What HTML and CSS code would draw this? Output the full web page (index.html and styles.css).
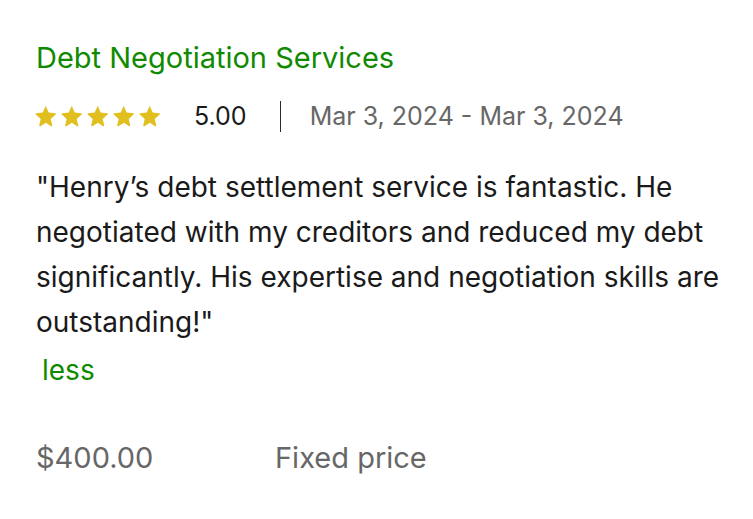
FILE: index.html
```html
<!DOCTYPE html>
<html lang="en">
<head>
<meta charset="utf-8">
<title>Review</title>
<link rel="stylesheet" href="styles.css">
</head>
<body>
<article class="review">
  <h2 class="title">Debt Negotiation Services</h2>
  <div class="meta">
    <div class="stars" aria-label="5 stars">
      <svg class="star" viewBox="0 0 24 24"><path d="M12 2.6l2.7 6 6.5.6c.7.1 1 .9.4 1.4l-4.9 4.3 1.5 6.4c.2.7-.6 1.2-1.2.9L12 18.8l-5.6 3.4c-.6.4-1.4-.2-1.2-.9l1.5-6.4-4.9-4.3c-.5-.5-.2-1.3.4-1.4l6.5-.6 2.7-6c.3-.6 1.3-.6 1.6 0z"/></svg>
      <svg class="star" viewBox="0 0 24 24"><path d="M12 2.6l2.7 6 6.5.6c.7.1 1 .9.4 1.4l-4.9 4.3 1.5 6.4c.2.7-.6 1.2-1.2.9L12 18.8l-5.6 3.4c-.6.4-1.4-.2-1.2-.9l1.5-6.4-4.9-4.3c-.5-.5-.2-1.3.4-1.4l6.5-.6 2.7-6c.3-.6 1.3-.6 1.6 0z"/></svg>
      <svg class="star" viewBox="0 0 24 24"><path d="M12 2.6l2.7 6 6.5.6c.7.1 1 .9.4 1.4l-4.9 4.3 1.5 6.4c.2.7-.6 1.2-1.2.9L12 18.8l-5.6 3.4c-.6.4-1.4-.2-1.2-.9l1.5-6.4-4.9-4.3c-.5-.5-.2-1.3.4-1.4l6.5-.6 2.7-6c.3-.6 1.3-.6 1.6 0z"/></svg>
      <svg class="star" viewBox="0 0 24 24"><path d="M12 2.6l2.7 6 6.5.6c.7.1 1 .9.4 1.4l-4.9 4.3 1.5 6.4c.2.7-.6 1.2-1.2.9L12 18.8l-5.6 3.4c-.6.4-1.4-.2-1.2-.9l1.5-6.4-4.9-4.3c-.5-.5-.2-1.3.4-1.4l6.5-.6 2.7-6c.3-.6 1.3-.6 1.6 0z"/></svg>
      <svg class="star" viewBox="0 0 24 24"><path d="M12 2.6l2.7 6 6.5.6c.7.1 1 .9.4 1.4l-4.9 4.3 1.5 6.4c.2.7-.6 1.2-1.2.9L12 18.8l-5.6 3.4c-.6.4-1.4-.2-1.2-.9l1.5-6.4-4.9-4.3c-.5-.5-.2-1.3.4-1.4l6.5-.6 2.7-6c.3-.6 1.3-.6 1.6 0z"/></svg>
    </div>
    <span class="score">5.00</span>
    <span class="divider"></span>
    <span class="dates">Mar 3, 2024 - Mar 3, 2024</span>
  </div>
  <p class="quote">"Henry’s debt settlement service is fantastic. He negotiated with my creditors and reduced my debt significantly. His expertise and negotiation skills are outstanding!"</p>
  <a class="less" href="#">less</a>
  <div class="pricing">
    <span class="price">$400.00</span>
    <span class="type">Fixed price</span>
  </div>
</article>
</body>
</html>
```

FILE: styles.css
```css
html, body {
  margin: 0;
  padding: 0;
  background: #ffffff;
}

body {
  font-family: Inter, "Liberation Sans", Arial, sans-serif;
  color: #1a1a1a;
}

.review {
  padding: 38px 20px 0 36px;
}

.title {
  margin: 0;
  font-size: 29px;
  font-weight: 400;
  line-height: 40px;
  color: #108a00;
}

.meta {
  display: flex;
  align-items: center;
  margin-top: 20px;
  height: 36px;
  font-size: 25px;
}

.stars {
  display: flex;
  gap: 2px;
  margin-left: -2px;
}

.star {
  width: 24px;
  height: 24px;
  fill: #e1bf1e;
}

.score {
  margin-left: 32px;
  color: #1a1a1a;
}

.divider {
  width: 1px;
  height: 31px;
  background: #2a2a2a;
  margin: 0 29px 0 33px;
}

.dates {
  color: #676767;
}

.quote {
  margin: 31px 0 0;
  font-size: 28px;
  line-height: 45px;
  color: #1a1a1a;
}

.less {
  display: block;
  margin-top: 3px;
  margin-left: 6px;
  font-size: 28px;
  line-height: 45px;
  color: #108a00;
  text-decoration: none;
}

.pricing {
  display: flex;
  margin-top: 42px;
  font-size: 29px;
  line-height: 45px;
  color: #676767;
}

.price {
  width: 239px;
}
```
